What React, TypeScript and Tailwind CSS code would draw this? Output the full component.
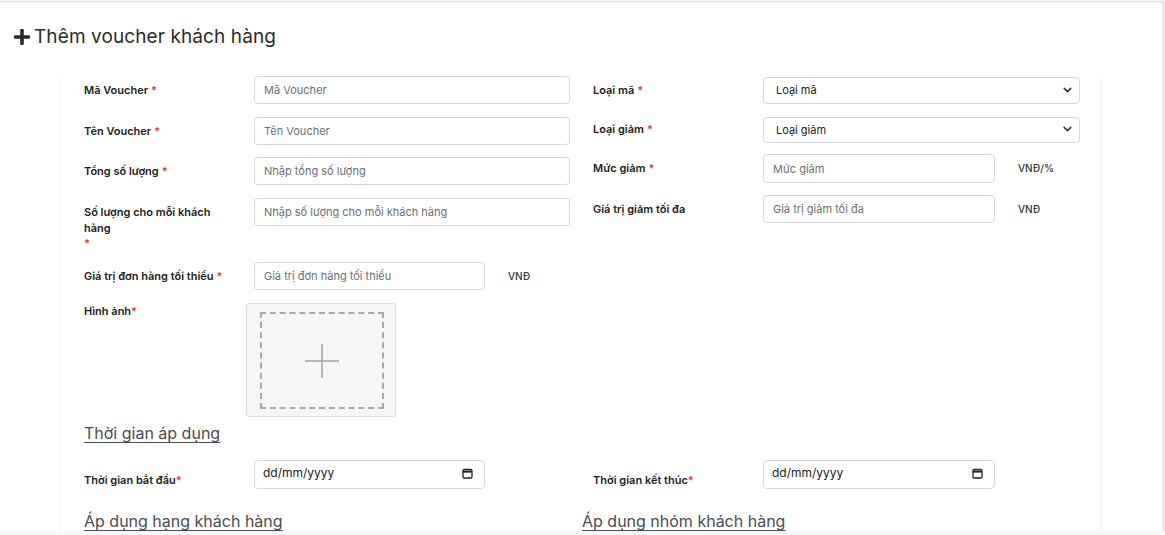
import { ChevronDown } from 'lucide-react';

const font = "font-['Inter','Noto_Sans',sans-serif]";

function Req() {
  return <span className="text-[#e53935] ml-[3px]">*</span>;
}

function Label({ children, w = 'w-[170px]', pt = 'pt-[6px]', extra = '' }: { children: React.ReactNode; w?: string; pt?: string; extra?: string }) {
  return (
    <div className={`${w} ${pt} ${extra} shrink-0 pr-[24px] text-[11px] leading-4 font-semibold text-[#222]`}>
      {children}
    </div>
  );
}

function Field({ placeholder, w = 'w-[316px]', h = 'h-[28px]' }: { placeholder: string; w?: string; h?: string }) {
  return (
    <input
      placeholder={placeholder}
      className={`${w} ${h} shrink-0 rounded-[4px] border border-[#d4d7dc] bg-white px-[9px] text-[11px] text-[#333] placeholder:text-[#6c6f75] outline-none`}
    />
  );
}

function Select({ value, h = 'h-[27px]' }: { value: string; h?: string }) {
  return (
    <div className={`relative w-[317px] ${h} shrink-0`}>
      <select className="h-full w-full appearance-none rounded-[4px] border border-[#d4d7dc] bg-white pl-[12px] text-[11px] text-[#222] outline-none">
        <option>{value}</option>
      </select>
      <ChevronDown size={13} strokeWidth={3.2} className="pointer-events-none absolute right-[6px] top-1/2 -translate-y-1/2 text-[#3b3f45]" />
    </div>
  );
}

function DateField({ w = 'w-[231px]' }: { w?: string }) {
  return (
    <div className={`${w} h-[29px] shrink-0 flex items-center justify-between rounded-[4px] border border-[#d4d7dc] bg-white pl-[8px] pr-[11px] text-[12px] text-[#222]`}>
      <span className="-mt-[3px]">dd/mm/yyyy</span>
      <svg width="11" height="11" viewBox="0 0 11 11" className="-mt-[2px]">
        <rect x="1" y="1.5" width="9" height="8.5" rx="1.2" fill="none" stroke="#222" strokeWidth="1.3" />
        <path d="M1 3.6h9" stroke="#222" strokeWidth="2" />
      </svg>
    </div>
  );
}

function Unit({ children }: { children: React.ReactNode }) {
  return <div className="ml-[23px] pt-[7px] text-[10px] font-medium text-[#333]">{children}</div>;
}

function SectionTitle({ children }: { children: React.ReactNode }) {
  return <div className="text-[16px] leading-5 text-[#4a4d52] underline underline-offset-[3px] decoration-[1px]">{children}</div>;
}

export default function App() {
  return (
    <div className={`w-[1165px] h-[535px] overflow-hidden bg-[#f5f7fa] ${font}`}>
      <div className="h-[530px] bg-white border-t-2 border-t-[#ececec] border-r-[3px] border-r-[#ececec] mt-px">
        <div className="flex items-center gap-[4px] pl-[14px] pt-[22px]">
          <svg width="16" height="16" viewBox="0 0 16 16" className="text-[#2b2b2b]">
            <path d="M8 1.5v13M1.5 8h13" stroke="currentColor" strokeWidth="3.6" strokeLinecap="round" />
          </svg>
          <h1 className="text-[19px] leading-6 text-[#2b2b2b] tracking-[0.1px]">Thêm voucher khách hàng</h1>
        </div>

        <div className="ml-[60px] w-[1042px] h-[600px] mt-[27px] pl-[23px] border-x border-[#f4f4f4]">
          <div className="flex">
            <div className="w-[509px] shrink-0">
              <div className="flex mb-[13px]">
                <Label>Mã Voucher<Req /></Label>
                <Field placeholder="Mã Voucher" />
              </div>
              <div className="flex mb-[12px]">
                <Label>Tên Voucher<Req /></Label>
                <Field placeholder="Tên Voucher" />
              </div>
              <div className="flex mb-[13px]">
                <Label>Tổng số lượng<Req /></Label>
                <Field placeholder="Nhập tổng số lượng" />
              </div>
              <div className="flex mb-[12px]">
                <Label>
                  Số lượng cho mỗi khách hàng
                  <span className="block text-[#e53935] leading-[14px]">*</span>
                </Label>
                <Field placeholder="Nhập số lượng cho mỗi khách hàng" />
              </div>
              <div className="flex mb-[13px]">
                <Label extra="whitespace-nowrap">Giá trị đơn hàng tối thiểu<Req /></Label>
                <Field placeholder="Giá trị đơn hàng tối thiểu" w="w-[231px]" />
                <Unit>VNĐ</Unit>
              </div>
            </div>
            <div className="flex-1">
              <div className="flex mb-[13px]">
                <Label>Loại mã<Req /></Label>
                <Select value="Loại mã" />
              </div>
              <div className="flex mb-[12px]">
                <Label pt="pt-[5px]">Loại giảm<Req /></Label>
                <Select value="Loại giảm" h="h-[26px]" />
              </div>
              <div className="flex mb-[12px]">
                <Label>Mức giảm<Req /></Label>
                <Field placeholder="Mức giảm" w="w-[232px]" h="h-[29px]" />
                <Unit>VNĐ/%</Unit>
              </div>
              <div className="flex">
                <Label>Giá trị giảm tối đa</Label>
                <Field placeholder="Giá trị giảm tối đa" w="w-[232px]" />
                <Unit>VNĐ</Unit>
              </div>
            </div>
          </div>

          <div className="flex">
            <Label w="w-[162px]" pt="pt-0">Hình ảnh<span className="text-[#e53935]">*</span></Label>
            <div className="w-[150px] h-[114px] rounded-[3px] border border-[#dcdcdc] bg-[#f6f6f6] pl-[13px] pr-[11px] pt-[8px] pb-[7px]">
              <div className="flex h-full w-full items-center justify-center border-2 border-dashed border-[#a8a8a8]">
                <svg width="36" height="36" viewBox="0 0 36 36">
                  <path d="M18 1v34M1 18h34" stroke="#a3a3a3" strokeWidth="1.6" />
                </svg>
              </div>
            </div>
          </div>

          <div className="mt-[6px]">
            <SectionTitle>Thời gian áp dụng</SectionTitle>
          </div>

          <div className="flex mt-[17px]">
            <div className="w-[509px] shrink-0 flex">
              <Label pt="pt-[12px]">Thời gian bắt đầu<span className="text-[#e53935]">*</span></Label>
              <DateField />
            </div>
            <div className="flex">
              <Label pt="pt-[12px]">Thời gian kết thúc<span className="text-[#e53935]">*</span></Label>
              <DateField w="w-[232px]" />
            </div>
          </div>

          <div className="flex mt-[22px]">
            <div className="w-[498px] shrink-0">
              <SectionTitle>Áp dụng hạng khách hàng</SectionTitle>
            </div>
            <SectionTitle>Áp dụng nhóm khách hàng</SectionTitle>
          </div>
        </div>
      </div>
    </div>
  );
}
